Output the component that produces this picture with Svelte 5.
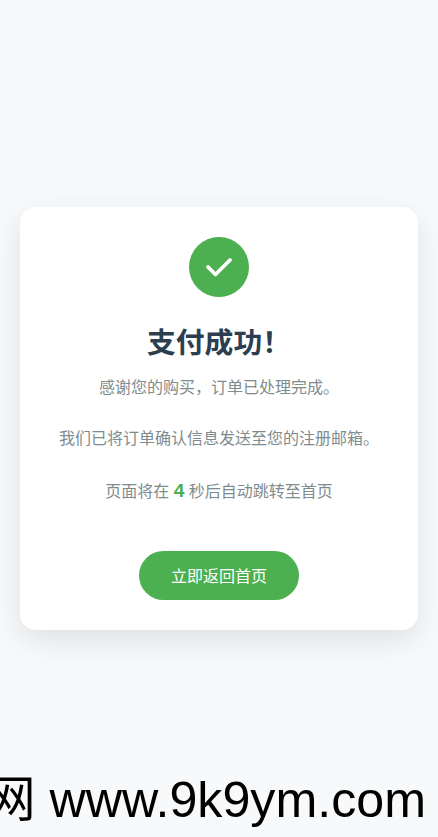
<script>
  let seconds = $state(4);
</script>

<main class="page">
  <section class="card">
    <div class="icon">
      <svg width="30" height="30" viewBox="0 0 30 30" fill="none" aria-hidden="true">
        <path d="M4 15 L11.5 22.5 L26 8" stroke="#fff" stroke-width="3.8" stroke-linecap="round" stroke-linejoin="round" />
      </svg>
    </div>
    <h1>支付成功！</h1>
    <p>感谢您的购买，订单已处理完成。</p>
    <p>我们已将订单确认信息发送至您的注册邮箱。</p>
    <p class="countdown">页面将在 <span class="num">{seconds}</span> 秒后自动跳转至首页</p>
    <button class="home">立即返回首页</button>
  </section>
</main>
<div class="mark">网 www.9k9ym.com</div>

<style>
  :global(body) {
    margin: 0;
    background: #f8f9fa;
    font-family: "Liberation Sans", "Noto Sans CJK SC", sans-serif;
  }

  .page {
    min-height: 837px;
    box-sizing: border-box;
    padding: 0 20px;
    display: flex;
    align-items: center;
    justify-content: center;
  }

  .card {
    width: 100%;
    box-sizing: border-box;
    padding: 30px;
    background: #fff;
    border-radius: 16px;
    box-shadow: 0 10px 30px rgba(0, 0, 0, 0.1);
    text-align: center;
  }

  .icon {
    width: 60px;
    height: 60px;
    margin: 0 auto 23px;
    border-radius: 50%;
    background: #4caf50;
    display: flex;
    align-items: center;
    justify-content: center;
  }

  h1 {
    margin: 0 0 14px;
    font-size: 28.8px;
    font-weight: 700;
    color: #2c3e50;
  }

  p {
    margin: 0 0 25px;
    font-size: 16px;
    line-height: 1.6;
    color: #7f8c8d;
  }

  .countdown {
    margin-bottom: 44px;
  }

  .num {
    font-size: 19.2px;
    font-weight: 700;
    color: #4caf50;
  }

  .home {
    width: 160px;
    height: 49px;
    border: 0;
    border-radius: 30px;
    background: #4caf50;
    color: #fff;
    font: inherit;
    font-size: 16px;
  }

  .mark {
    position: absolute;
    top: 759px;
    right: 12px;
    white-space: nowrap;
    font-size: 50.2px;
    color: #000;
  }
</style>
